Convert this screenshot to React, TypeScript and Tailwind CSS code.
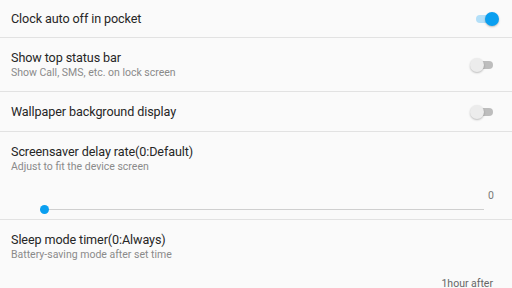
import React from "react";

function Toggle({ on }: { on: boolean }) {
  return (
    <div className="relative w-[29px] h-[14px] shrink-0">
      <div
        className={
          on
            ? "absolute left-[6px] right-[6px] top-[3px] h-[8px] rounded-full bg-[#b3dff8]"
            : "absolute left-[6px] right-[6px] top-[3px] h-[8px] rounded-full bg-[#bdbdbd]"
        }
      />
      <div
        className={
          on
            ? "absolute right-0 top-0 w-[14px] h-[14px] rounded-full bg-[#0a9ff0] shadow-[0_1px_2px_rgba(0,0,0,0.25)]"
            : "absolute left-0 top-0 w-[14px] h-[14px] rounded-full bg-[#ececec] shadow-[0_1px_2px_rgba(0,0,0,0.25)]"
        }
      />
    </div>
  );
}

export default function App() {
  return (
    <div
      className="w-[512px] h-[288px] overflow-hidden bg-[#fafafa] text-[#262626]"
      style={{ fontFamily: "Roboto, 'Noto Sans', sans-serif" }}
    >
      <div className="h-[38px] flex items-center justify-between pl-[11px] pr-[13px] border-b border-[#e2e2e2]">
        <span className="text-[12.6px] leading-[16px] tracking-[-0.1px]">Clock auto off in pocket</span>
        <Toggle on={true} />
      </div>
      <div className="h-[54px] flex items-center justify-between pl-[11px] pr-[13px] border-b border-[#e2e2e2]">
        <div className="flex flex-col">
          <span className="text-[12.6px] leading-[16px] tracking-[-0.1px]">Show top status bar</span>
          <span className="text-[10.5px] leading-[14px] text-[#8a8a8a]">Show Call, SMS, etc. on lock screen</span>
        </div>
        <Toggle on={false} />
      </div>
      <div className="h-[40px] flex items-center justify-between pl-[11px] pr-[13px] border-b border-[#e2e2e2]">
        <span className="text-[12.6px] leading-[16px] tracking-[-0.1px]">Wallpaper background display</span>
        <Toggle on={false} />
      </div>
      <div className="h-[88px] flex flex-col pt-[12px] pl-[11px] pr-[18px] border-b border-[#e2e2e2]">
        <span className="text-[12.6px] leading-[16px] tracking-[-0.1px]">Screensaver delay rate(0:Default)</span>
        <span className="text-[10.5px] leading-[14px] text-[#8a8a8a]">Adjust to fit the device screen</span>
        <span className="mt-[15px] self-end text-[10.5px] leading-[14px] text-[#777]">0</span>
        <div className="relative mt-[1px] ml-[29px] w-[444px] h-[10px]">
          <div className="absolute left-0 right-0 top-[4.5px] h-[1px] bg-[#cfcfcf]" />
          <div className="absolute left-0 top-[0.5px] w-[9px] h-[9px] rounded-full bg-[#0a9ff0]" />
        </div>
      </div>
      <div className="flex flex-col pt-[12px] pl-[11px] pr-[19px]">
        <span className="text-[12.6px] leading-[16px] tracking-[-0.1px]">Sleep mode timer(0:Always)</span>
        <span className="text-[10.5px] leading-[14px] text-[#8a8a8a]">Battery-saving mode after set time</span>
        <span className="mt-[15px] self-end text-[10.5px] leading-[14px] text-[#666]">1hour after</span>
      </div>
    </div>
  );
}
